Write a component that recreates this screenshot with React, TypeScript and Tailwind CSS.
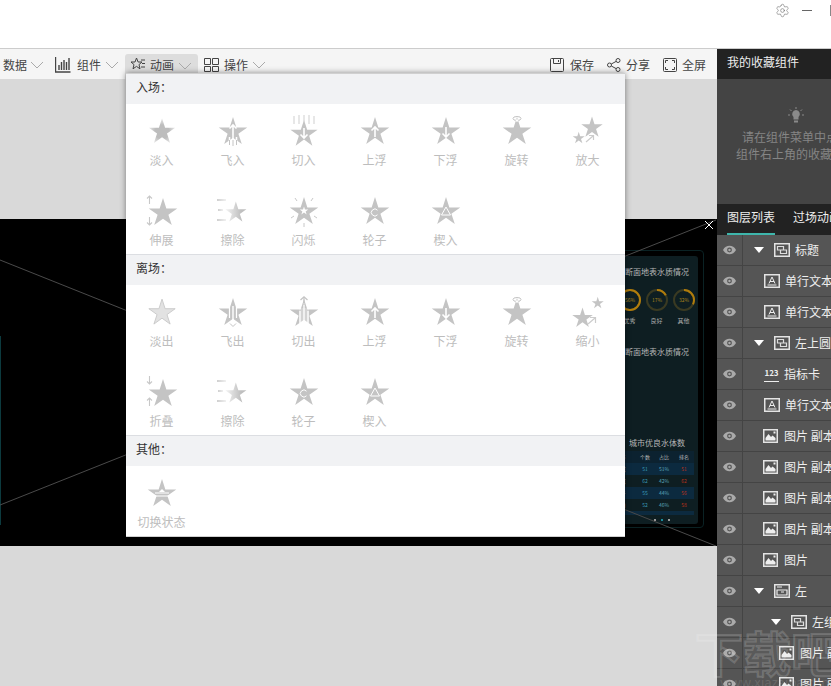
import React from 'react'
import { Settings } from 'lucide-react'

const STAR = '16,2 19.35,12.4 30.3,12.4 21.4,18.8 24.8,29.1 16,22.7 7.2,29.1 10.6,18.8 1.7,12.4 12.65,12.4'
const GREY = '#c4c4c4'

const ArrowUp = ({ x = 16, y = 12 }: { x?: number; y?: number }) => (
  <path d={`M${x - 3.5} ${y + 3.5}L${x} ${y}l3.5 3.5M${x} ${y}v10`} fill="none" stroke="#fff" strokeWidth="1.6" />
)
const ArrowDown = ({ x = 16, y = 22 }: { x?: number; y?: number }) => (
  <path d={`M${x - 3.5} ${y - 3.5}L${x} ${y}l3.5 -3.5M${x} ${y}v-10`} fill="none" stroke="#fff" strokeWidth="1.6" />
)

function StarIcon({ kind }: { kind: string }) {
  const base = <polygon points={STAR} fill={GREY} />
  let body: React.ReactNode = base
  if (kind === 'fadeIn') {
    body = (
      <>
        <defs>
          <radialGradient id="fadeInG" cx="50%" cy="55%" r="55%">
            <stop offset="50%" stopColor="#bdbdbd" />
            <stop offset="100%" stopColor="#ececec" />
          </radialGradient>
        </defs>
        <polygon points={STAR} fill="url(#fadeInG)" transform="translate(1.3 1.3) scale(.92)" />
      </>
    )
  } else if (kind === 'fadeOut') {
    body = <polygon points={STAR} fill="#e2e2e2" stroke="#c8c8c8" strokeWidth="1" transform="translate(1.3 1.3) scale(.92)" />
  } else if (kind === 'flyIn') {
    body = (
      <>
        {base}
        <ArrowUp y={10} />
        <path d="M16 20v11M12.500 22v8M19.500 22v8" stroke="#fff" strokeWidth="1.500" />
        <path d="M12.500 25v5M16 25v6M19.500 25v5" stroke="#c4c4c4" strokeWidth="1" />
      </>
    )
  } else if (kind === 'flyOut') {
    body = (
      <>
        {base}
        <path d="M12.500 11v11M19.500 11v11" stroke="#fff" strokeWidth="1.200" />
        <path d="M16 10v20M12.500 27l3.500 3.500 3.500-3.500" fill="none" stroke="#fff" strokeWidth="1.400" />
        <path d="M13 27.500l3 3 3-3" fill="none" stroke="#c4c4c4" strokeWidth="1" />
      </>
    )
  } else if (kind === 'cutIn') {
    body = (
      <>
        <polygon points={STAR} fill={GREY} transform="translate(.8 3) scale(.95)" />
        <path d="M6 1v8M11 0v9M16 0v7M21 0v9M26 1v8" stroke="#d8d8d8" strokeWidth="1.200" />
        <ArrowDown y={23} />
      </>
    )
  } else if (kind === 'cutOut') {
    body = (
      <>
        <polygon points={STAR} fill={GREY} transform="translate(0 1)" />
        <path d="M11 12h10v15H11z" fill="#fff" opacity=".25" />
        <path d="M12 15v12M16 7v20M20 15v12" stroke="#fff" strokeWidth="1.300" />
        <path d="M12.500 4L16 .8 19.500 4" fill="none" stroke="#c4c4c4" strokeWidth="1.300" />
        <path d="M16 1v8" stroke="#c4c4c4" strokeWidth="1.300" />
      </>
    )
  } else if (kind === 'up') {
    body = (
      <>
        {base}
        <ArrowUp />
      </>
    )
  } else if (kind === 'down') {
    body = (
      <>
        {base}
        <ArrowDown />
      </>
    )
  } else if (kind === 'rotate') {
    body = (
      <>
        {base}
        <ellipse cx="16" cy="3.500" rx="4" ry="2" fill="none" stroke="#c4c4c4" strokeWidth="1" />
        <circle cx="16" cy="5.500" r="1.200" fill="#fff" />
      </>
    )
  } else if (kind === 'zoomIn') {
    body = (
      <>
        <polygon points={STAR} fill={GREY} transform="translate(8 0) scale(.75)" />
        <polygon points={STAR} fill={GREY} transform="translate(0 16) scale(.42)" />
        <path d="M14 27l7-6M17 20.500h4.500V25" fill="none" stroke="#ccc" strokeWidth="1.200" />
      </>
    )
  } else if (kind === 'zoomOut') {
    body = (
      <>
        <polygon points={STAR} fill={GREY} transform="translate(-1 10) scale(.72)" />
        <polygon points={STAR} fill={GREY} transform="translate(19 0) scale(.42)" />
        <path d="M16 28l7-6M18 21.500h5.500V27" fill="none" stroke="#ccc" strokeWidth="1.200" />
      </>
    )
  } else if (kind === 'stretch' || kind === 'fold') {
    body = (
      <>
        <polygon points={STAR} fill={GREY} transform="translate(1 1)" />
        {kind === 'stretch' ? (
          <path d="M3.500 9V1M1 3.500L3.500 1 6 3.500M3.500 22v8M1 27.500L3.500 30 6 27.500" fill="none" stroke="#c8c8c8" strokeWidth="1.100" />
        ) : (
          <path d="M3.500 0v8M1 5.500L3.500 8 6 5.500M3.500 30v-8M1 24.500L3.500 22 6 24.500" fill="none" stroke="#c8c8c8" strokeWidth="1.100" />
        )}
      </>
    )
  } else if (kind === 'wipe') {
    body = (
      <>
        <defs>
          <linearGradient id="wipeG" x1="0" x2="1" y1="0" y2="0">
            <stop offset="0%" stopColor="#f4f4f4" />
            <stop offset="75%" stopColor="#bfbfbf" />
          </linearGradient>
          <linearGradient id="wipeDash" x1="0" x2="1" y1="0" y2="0">
            <stop offset="0%" stopColor="#cfcfcf" />
            <stop offset="100%" stopColor="#f0f0f0" />
          </linearGradient>
        </defs>
        <polygon points={STAR} fill="url(#wipeG)" transform="translate(7 5) scale(.74)" />
        <rect x="0" y="4" width="9" height="2" fill="url(#wipeDash)" />
        <rect x="1" y="14" width="5" height="2" fill="url(#wipeDash)" />
        <rect x="0" y="24" width="9" height="2" fill="url(#wipeDash)" />
      </>
    )
  } else if (kind === 'flash') {
    body = (
      <>
        {base}
        <polygon points={STAR} fill="#fff" transform="translate(11.200 10.800) scale(.3)" />
        <path d="M7 3l2 3M25 3l-2 3M3 23l3-2M29 23l-3-2M16 28v4" stroke="#c8c8c8" strokeWidth="1" />
      </>
    )
  } else if (kind === 'wheel') {
    body = (
      <>
        {base}
        <path d="M18.500 15.200a3.500 3.500 0 1 0 0 4.600" fill="none" stroke="#fff" strokeWidth="1" />
      </>
    )
  } else if (kind === 'wedge') {
    body = (
      <>
        {base}
        <path d="M16 12l4.500 8h-9z" fill="none" stroke="#fff" strokeWidth="1" />
      </>
    )
  } else if (kind === 'swap') {
    body = (
      <>
        {base}
        <path d="M9 16h14M9 19h14" stroke="#fff" strokeWidth="1.200" />
        <path d="M16 12l3 3h-6z" fill="#fff" />
      </>
    )
  }
  return (
    <svg width="32" height="32" viewBox="0 0 32 32" className="shrink-0 overflow-visible">
      {body}
    </svg>
  )
}

const enterItems = [
  ['淡入', 'fadeIn'],
  ['飞入', 'flyIn'],
  ['切入', 'cutIn'],
  ['上浮', 'up'],
  ['下浮', 'down'],
  ['旋转', 'rotate'],
  ['放大', 'zoomIn'],
  ['伸展', 'stretch'],
  ['擦除', 'wipe'],
  ['闪烁', 'flash'],
  ['轮子', 'wheel'],
  ['楔入', 'wedge'],
]
const leaveItems = [
  ['淡出', 'fadeOut'],
  ['飞出', 'flyOut'],
  ['切出', 'cutOut'],
  ['上浮', 'up'],
  ['下浮', 'down'],
  ['旋转', 'rotate'],
  ['缩小', 'zoomOut'],
  ['折叠', 'fold'],
  ['擦除', 'wipe'],
  ['轮子', 'wheel'],
  ['楔入', 'wedge'],
]
const otherItems = [['切换状态', 'swap']]

function MenuSection({ title, items, last }: { title: string; items: string[][]; last?: boolean }) {
  return (
    <div className={last ? '' : 'border-b border-[#dcdee2]'}>
      <div className="h-[30px] bg-[#f1f2f4] pl-[10px] leading-[26px] text-[12px] text-[#333]">{title}</div>
      <div className="grid grid-cols-[repeat(7,71px)] gap-y-[10px]">
        {items.map(([label, kind]) => (
          <div key={label + kind} className="flex h-[70px] flex-col items-center pt-[11px]">
            <StarIcon kind={kind} />
            <span className="mt-[5px] whitespace-nowrap text-[12px] leading-4 text-[#bdbdbd]">{label}</span>
          </div>
        ))}
      </div>
    </div>
  )
}

const Chevron = () => (
  <svg width="14" height="8" viewBox="0 0 14 8" className="shrink-0">
    <path d="M1 1l6 6 6-6" fill="none" stroke="#aaa" strokeWidth="1" />
  </svg>
)

function ToolIcon({ name }: { name: string }) {
  const s = { fill: 'none', stroke: '#444', strokeWidth: 1 }
  return (
    <svg width="16" height="16" viewBox="0 0 16 16" className="shrink-0">
      {name === 'chart' && <path d="M.5 0v15h15M4 13V8M6.500 13V5M9 13V3M11.500 13V5M14 13V1" {...s} strokeWidth={1.4} />}
      {name === 'star' && (
        <path d="M6.500 2l1.600 4H12l-3 2.600 1 4.200-3.500-2.400L3 12.800l1-4.200L1 6h4zM11 4h4M12 7.500h3M11 11h4" {...s} />
      )}
      {name === 'grid' && <path d="M1.500 1.500h6v6h-6zM9.500 1.500h6v6h-6zM1.500 9.500h6v5h-6zM9.500 9.500h6v5h-6z" {...s} />}
      {name === 'save' && <path d="M1.500 2.500a1 1 0 0 1 1-1h11a1 1 0 0 1 1 1v11a1 1 0 0 1-1 1h-11a1 1 0 0 1-1-1zM4.500 1.500v5h7v-5M9.500 3v2" {...s} />}
      {name === 'share' && (
        <>
          <circle cx="3.500" cy="8" r="2" {...s} />
          <circle cx="12" cy="3.500" r="2" {...s} />
          <circle cx="12" cy="12.500" r="2" {...s} />
          <path d="M5.300 7l5-2.700M5.300 9l5 2.700" {...s} />
        </>
      )}
      {name === 'full' && (
        <path d="M2.500 1.500h11a1 1 0 0 1 1 1v11a1 1 0 0 1-1 1h-11a1 1 0 0 1-1-1v-11a1 1 0 0 1 1-1zM3.500 6V3.500H6M10 3.500h2.500V6M12.500 10v2.500H10M6 12.500H3.500V10" {...s} />
      )}
    </svg>
  )
}

const EyeIcon = () => (
  <svg width="13" height="10" viewBox="0 0 14 10">
    <path d="M0 5c3-6 11-6 14 0-3 6-11 6-14 0z" fill="#aaa" />
    <circle cx="7" cy="5" r="2.600" fill="#555" />
    <circle cx="7" cy="5" r="1.300" fill="#aaa" />
  </svg>
)

function LayerIcon({ type }: { type: string }) {
  if (type === 'num') {
    return (
      <span className="flex h-[15px] w-[15px] shrink-0 flex-col items-center border-b border-[#eee] text-[8px] font-bold leading-[12px] text-[#eee]">
        123
      </span>
    )
  }
  const w = type === 'image' ? 15 : 16
  return (
    <svg width={w} height="14" viewBox={`0 0 ${w} 14`} className="shrink-0">
      <rect x=".75" y=".75" width={w - 1.5} height="12.500" fill="none" stroke="#e4e4e4" strokeWidth="1.500" />
      {type === 'text' && <path d="M3.500 11h9M5 9.500L8 3l3 6.500M6 7.500h4" fill="none" stroke="#eee" />}
      {type === 'image' && (
        <>
          <path d="M2.500 11.500V9l3-4 2.500 3 1.500-1.500 3 2.500v2.500z" fill="#eee" />
          <rect x="10.500" y="2.500" width="2" height="2" fill="#eee" />
        </>
      )}
      {type === 'group' && <path d="M3.500 3.500h6v3.500h-6zM6.500 7h6v3.500h-6z" fill="none" stroke="#ddd" strokeWidth="1.200" />}
      {type === 'board' && <path d="M3 3h5M3 6h10v5H3zM7 8h3" fill="none" stroke="#eee" strokeWidth="1.200" />}
    </svg>
  )
}

const layers = [
  { name: '标题', type: 'group', pad: 'pl-[11px]', arrow: true },
  { name: '单行文本', type: 'text', pad: 'pl-[21px]' },
  { name: '单行文本', type: 'text', pad: 'pl-[21px]' },
  { name: '左上圆环', type: 'group', pad: 'pl-[11px]', arrow: true },
  { name: '指标卡', type: 'num', pad: 'pl-[21px]' },
  { name: '单行文本', type: 'text', pad: 'pl-[21px]' },
  { name: '图片 副本', type: 'image', pad: 'pl-[20px]', gap: true },
  { name: '图片 副本', type: 'image', pad: 'pl-[20px]', gap: true },
  { name: '图片 副本', type: 'image', pad: 'pl-[20px]', gap: true },
  { name: '图片 副本', type: 'image', pad: 'pl-[20px]', gap: true },
  { name: '图片', type: 'image', pad: 'pl-[20px]', gap: true },
  { name: '左', type: 'board', pad: 'pl-[11px]', arrow: true },
  { name: '左组', type: 'group', pad: 'pl-[28px]', arrow: true },
  { name: '图片 副本', type: 'image', pad: 'pl-[36px]', gap: true },
  { name: '图片 副本', type: 'image', pad: 'pl-[36px]', gap: true },
]

function LayerRow({ item }: { item: (typeof layers)[number] }) {
  return (
    <div className="flex h-[31px] shrink-0 items-stretch border-b border-[#444] bg-[#555]">
      <div className="flex w-[26px] shrink-0 items-center justify-center border-r border-[#444]">
        <EyeIcon />
      </div>
      <div className={`flex items-center whitespace-nowrap text-[12px] text-[#eee] ${item.pad}`}>
        {item.arrow && (
          <span className="mr-[10px] h-0 w-0 border-x-[5px] border-t-[6px] border-x-transparent border-t-white" />
        )}
        <LayerIcon type={item.type} />
        <span className={item.gap ? 'ml-[6px]' : 'ml-[5px]'}>{item.name}</span>
      </div>
    </div>
  )
}

function Ring({ pct, label, value }: { pct: number; label: string; value: string }) {
  const c = 2 * Math.PI * 10
  return (
    <div className="flex w-[27px] shrink-0 flex-col items-center">
      <svg width="24" height="24" viewBox="0 0 24 24">
        <circle cx="12" cy="12" r="10" fill="none" stroke="#3a3a22" strokeWidth="2" />
        <circle
          cx="12"
          cy="12"
          r="10"
          fill="none"
          stroke="#b07c0c"
          strokeWidth="2"
          strokeDasharray={`${(c * pct) / 100} ${c}`}
          transform="rotate(-90 12 12)"
        />
        <text x="12" y="14" textAnchor="middle" fontSize="5" fill="#a8841c">
          {value}
        </text>
      </svg>
      <span className="mt-[4px] whitespace-nowrap text-[6px] leading-[10px] text-[#aaa]">{label}</span>
    </div>
  )
}

const tableRows = [
  ['数据', '51', '51%', '51'],
  ['数据', '62', '42%', '62'],
  ['南宁', '55', '44%', '56'],
  ['柳州', '52', '46%', '58'],
]

function ScreenPanel() {
  return (
    <div className="absolute right-[13px] top-[31px] h-[278px] w-[100px] rounded-[4px] border border-[#0a2224] pb-[3px] pr-[5px] pt-[5px]">
      <div className="flex h-full flex-col rounded-[3px] bg-[#0e1e22] pl-[20px]">
        <div className="mt-[11px] whitespace-nowrap text-[8px] leading-[10px] text-[#b5b5b5]">断面地表水质情况</div>
        <div className="mt-[11px] flex -ml-[9px]">
          <Ring pct={100} label="优秀" value="56%" />
          <Ring pct={17} label="良好" value="17%" />
          <Ring pct={32} label="其他" value="32%" />
        </div>
        <div className="mt-[21px] whitespace-nowrap text-[8px] leading-[10px] text-[#b5b5b5]">断面地表水质情况</div>
        <div className="mt-[81px] whitespace-nowrap pl-[4px] text-[8px] leading-[10px] text-[#b5b5b5]">城市优良水体数</div>
        <div className="mt-[3px] -ml-[20px] mr-[4px] flex flex-col text-[5px]">
          <div className="grid h-[12px] grid-cols-[1fr_18px_20px_20px] items-center bg-[#0c2230] text-center text-[#bbb]">
            <span>城市</span>
            <span>个数</span>
            <span>占比</span>
            <span>排名</span>
          </div>
          {tableRows.map((r, i) => (
            <div
              key={i}
              className={`grid h-[12px] grid-cols-[1fr_18px_20px_20px] items-center text-center ${i % 2 === 0 ? 'bg-[#0c2a3f]' : ''}`}
            >
              <span className="text-[#bbb]">{r[0]}</span>
              <span className="text-[#3a9ab8]">{r[1]}</span>
              <span className="text-[#5aa5b8]">{r[2]}</span>
              <span className="text-[#b8321c]">{r[3]}</span>
            </div>
          ))}
          <div className="h-[4px] bg-[#0c2a3f]" />
        </div>
        <div className="mt-[4px] flex justify-center gap-[5px]">
          <span className="h-[2px] w-[2px] bg-[#999]" />
          <span className="h-[2px] w-[2px] bg-[#1b8a9a]" />
          <span className="h-[2px] w-[2px] bg-[#999]" />
        </div>
      </div>
    </div>
  )
}

export default function App() {
  const font = 'font-["Noto_Sans_CJK_SC","Liberation_Sans",sans-serif]'
  return (
    <div className={`relative flex h-[686px] w-[831px] flex-col overflow-hidden bg-white ${font}`}>
      {/* 상단 타이틀바 */}
      <div className="flex h-[49px] shrink-0 items-start justify-end overflow-hidden border-b border-[#ccc] bg-white pt-[3px]">
        <Settings size={15} strokeWidth={0.9} color="#666" />
        <span className="ml-[12px] mt-[7px] h-px w-[10px] bg-[#666]" />
        <span className="ml-[18px] mr-[-10px] mt-[2px] h-[11px] w-[11px] border border-[#888]" />
      </div>

      <div className="flex min-h-0 flex-1">
        <div className="flex min-w-0 flex-1 flex-col">
          {/* 툴바 */}
          <div className="flex h-[30px] shrink-0 items-center bg-[#f5f5f5] pt-[1px] text-[12px] text-[#444]">
            <div className="flex items-center gap-[3px] pl-[3px]">
              <span>数据</span>
              <Chevron />
            </div>
            <div className="ml-[11px] flex items-center">
              <ToolIcon name="chart" />
              <span className="ml-[6px]">组件</span>
              <span className="ml-[4px]">
                <Chevron />
              </span>
            </div>
            <div className="ml-[6px] mt-[3px] flex h-[25px] w-[73px] items-start rounded-t-[3px] bg-[#ddd] pl-[5px] pt-[2px]">
              <ToolIcon name="star" />
              <span className="ml-[4px]">动画</span>
              <span className="ml-[4px] mt-[6px]">
                <Chevron />
              </span>
            </div>
            <div className="ml-[5px] flex items-center">
              <ToolIcon name="grid" />
              <span className="ml-[5px]">操作</span>
              <span className="ml-[4px]">
                <Chevron />
              </span>
            </div>
            <div className="ml-auto flex items-center pr-[11px]">
              <ToolIcon name="save" />
              <span className="ml-[5px]">保存</span>
              <span className="ml-[12px]">
                <ToolIcon name="share" />
              </span>
              <span className="ml-[4px]">分享</span>
              <span className="ml-[12px]">
                <ToolIcon name="full" />
              </span>
              <span className="ml-[4px]">全屏</span>
            </div>
          </div>

          {/* 캔버스 */}
          <div className="flex min-h-0 flex-1 flex-col bg-[#d9d9d9] pt-[140px]">
            <div className="relative h-[327px] shrink-0 bg-black">
              <div className="absolute left-0 top-[117px] h-[189px] w-px bg-[#0c3a3e]" />
              <ScreenPanel />
              <svg className="absolute inset-0" width="716" height="327" viewBox="0 0 716 327">
                <path d="M0 41L716 327M0 286L716 1" stroke="#4a4a4a" strokeWidth="1" fill="none" />
              </svg>
              <svg className="absolute right-[3px] top-[1px]" width="10" height="10" viewBox="0 0 10 10">
                <path d="M1 1l8 8M9 1l-8 8" stroke="#fff" strokeWidth="1" />
              </svg>
            </div>
          </div>
        </div>

        {/* 오른쪽 패널 */}
        <div className="flex w-[114px] shrink-0 flex-col overflow-hidden">
          <div className="h-[30px] shrink-0 whitespace-nowrap bg-[#222] pl-[10px] text-[12px] leading-[26px] text-[#eee]">
            我的收藏组件
          </div>
          <div className="flex h-[125px] w-[158px] shrink-0 flex-col items-center bg-[#444] pt-[28px] text-[12px] leading-[17px] text-[#858585]">
            <svg width="16" height="16" viewBox="0 0 16 16">
              <path d="M8 3a4 4 0 0 1 2.500 7v2.500h-5V10A4 4 0 0 1 8 3z" fill="#8a8a8a" />
              <path d="M8 0v2M2 2.500l1.500 1.500M14 2.500L12.500 4M0 8h2M14 8h2" stroke="#8a8a8a" />
              <rect x="6" y="13.500" width="4" height="2" fill="#8a8a8a" />
            </svg>
            <span className="mt-[5px] whitespace-nowrap">请在组件菜单中点击</span>
            <span className="whitespace-nowrap">组件右上角的收藏按钮</span>
          </div>
          <div className="flex h-[31px] shrink-0 items-start gap-[18px] whitespace-nowrap bg-[#222] pl-[10px] text-[12px] text-[#eee]">
            <span className="mt-[4px] h-[27px] w-[51px] border-b-2 border-[#3eb6ac] leading-[17px]">图层列表</span>
            <span className="mt-[4px] leading-[17px]">过场动画</span>
          </div>
          {layers.map((item, i) => (
            <LayerRow key={i} item={item} />
          ))}
        </div>
      </div>

      {/* 애니메이션 드롭다운 */}
      <div className="absolute left-[126px] top-[73px] w-[499px] border-t border-b border-[#d0d0d0] bg-white shadow-[0_0_6px_rgba(0,0,0,0.45)]">
        <MenuSection title="入场：" items={enterItems} />
        <MenuSection title="离场：" items={leaveItems} />
        <MenuSection title="其他：" items={otherItems} last />
      </div>

      {/* 워터마크 */}
      <div className="pointer-events-none absolute left-[695px] top-[623px] whitespace-nowrap text-[48px] font-bold leading-[56px] text-[rgba(255,255,255,0.04)] [-webkit-text-stroke:2px_rgba(255,255,255,0.18)]">
        下载吧
      </div>
      <div className="pointer-events-none absolute left-[720px] top-[675px] whitespace-nowrap text-[13px] leading-[14px] text-[rgba(255,255,255,0.12)]">
        www.xiazaiba.com
      </div>
    </div>
  )
}
